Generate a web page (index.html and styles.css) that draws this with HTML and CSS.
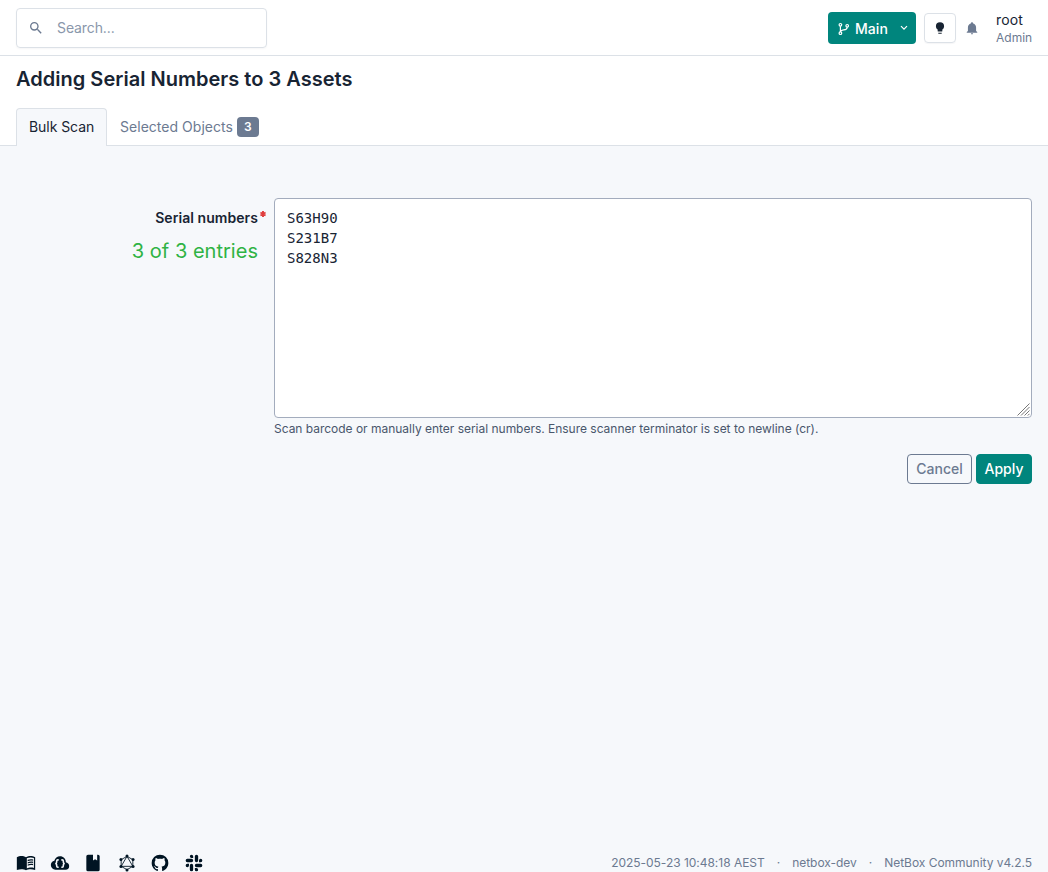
FILE: index.html
```html
<!DOCTYPE html>
<html lang="en">
<head>
<meta charset="utf-8">
<title>Adding Serial Numbers to 3 Assets</title>
<link rel="stylesheet" href="styles.css">
</head>
<body>
<div class="page">
  <header class="topbar">
    <div class="search">
      <svg class="i16" viewBox="0 0 24 24"><path d="M9.5,3A6.5,6.5 0 0,1 16,9.5C16,11.11 15.41,12.59 14.44,13.73L14.71,14H15.5L20.5,19L19,20.5L14,15.5V14.71L13.73,14.44C12.59,15.41 11.11,16 9.5,16A6.5,6.5 0 0,1 3,9.5A6.5,6.5 0 0,1 9.5,3M9.5,5C7,5 5,7 5,9.5C5,12 7,14 9.5,14C12,14 14,12 14,9.5C14,7 12,5 9.5,5Z"/></svg>
      <span>Search...</span>
    </div>
    <div class="branch">
      <svg class="branch-icon" viewBox="0 0 14 14" fill="none" stroke="currentColor" stroke-width="1.2"><circle cx="3.4" cy="2.8" r="1.3"/><circle cx="3.4" cy="11.2" r="1.3"/><circle cx="10.2" cy="3.8" r="1.3"/><path d="M3.4 4.2V9.9M10.2 5.2C10.2 7.6 8.4 7.7 6.6 7.9C4.8 8.1 3.7 8.8 3.4 9.9"/></svg>
      <span>Main</span>
      <svg class="chevron" viewBox="0 0 8 6" fill="none" stroke="currentColor" stroke-width="1.2"><path d="M1 1.2L4 4.2L7 1.2"/></svg>
    </div>
    <div class="theme"><svg class="i14" viewBox="0 0 24 24"><path d="M12,2A7,7 0 0,0 5,9C5,11.38 6.19,13.47 8,14.74V17A1,1 0 0,0 9,18H15A1,1 0 0,0 16,17V14.74C17.81,13.47 19,11.38 19,9A7,7 0 0,0 12,2M9,21A1,1 0 0,0 10,22H14A1,1 0 0,0 15,21V20H9V21Z"/></svg></div>
    <svg class="bell" viewBox="0 0 24 24"><path d="M21,19V20H3V19L5,17V11C5,7.9 7.03,5.17 10,4.29C10,4.19 10,4.1 10,4A2,2 0 0,1 12,2A2,2 0 0,1 14,4C14,4.1 14,4.19 14,4.29C16.97,5.17 19,7.9 19,11V17L21,19M14,21A2,2 0 0,1 12,23A2,2 0 0,1 10,21"/></svg>
    <div class="user"><div class="user-name">root</div><div class="user-role">Admin</div></div>
  </header>
  <section class="heading">
    <h1>Adding Serial Numbers to 3 Assets</h1>
    <nav class="tabs">
      <div class="tab active">Bulk Scan</div>
      <div class="tab">Selected Objects<span class="badge">3</span></div>
    </nav>
  </section>
  <main>
    <div class="row">
      <div class="labels">
        <div class="label">Serial numbers<svg class="required" viewBox="0 0 6 6"><path d="M3 0V6M.4 1.5L5.6 4.5M.4 4.5L5.6 1.5"/></svg></div>
        <div class="count">3 of 3 entries</div>
      </div>
      <div class="field">
        <div class="area">S63H90<br>S231B7<br>S828N3
          <svg class="grip" viewBox="0 0 13 13"><path d="M.5 12.5L12.5 .5M4 12.5L12.5 4M7.5 12.5L12.5 7.5M10.8 12.5L12.5 10.8"/></svg>
        </div>
        <div class="hint">Scan barcode or manually enter serial numbers. Ensure scanner terminator is set to newline (cr).</div>
      </div>
    </div>
    <div class="actions"><div class="btn cancel">Cancel</div><div class="btn apply">Apply</div></div>
  </main>
  <footer>
    <div class="links">
      <svg viewBox="0 0 24 24"><path fill-rule="evenodd" d="M1 5C2.5 3.9 4.7 3.5 6.5 3.5S10.5 3.9 12 5C13.5 3.9 15.7 3.5 17.5 3.5S21.5 3.9 23 5V20.5C21.3 19.7 19.3 19.4 17.5 19.4C15.5 19.4 13.5 19.7 12 20.6C10.5 19.7 8.5 19.4 6.5 19.4C4.7 19.4 2.8 19.7 1 20.5ZM13 6.3V18.5C15 17.5 19 17.2 21.5 18V6C19 5 15.3 5.2 13 6.3ZM14 8.2C16 7.4 18.5 7.3 20.5 7.8V9.3C18.5 8.8 16 8.9 14 9.8ZM14 11C16 10.2 18.5 10 20.5 10.5V12C18.5 11.5 16 11.7 14 12.5ZM14 13.7C16 12.9 18.5 12.7 20.5 13.2V14.8C18.5 14.3 16 14.4 14 15.3Z"/></svg>
      <svg viewBox="0 0 24 24"><path d="M6.5 20A5.5 5.5 0 0 1 1 14.5C1 12 2.7 9.9 5.2 9.3C6 6.3 8.7 4 12 4C16 4 19 7 19 11C21.2 11.2 23 13.1 23 15.5A4.5 4.5 0 0 1 18.5 20Z"/><path d="M10.4 8.2H9.4Q8 8.2 8 9.6V11Q8 12.6 6.2 12.6Q8 12.6 8 14.2V15.6Q8 17 9.4 17H10.4M13.6 8.2H14.6Q16 8.2 16 9.6V11Q16 12.6 17.8 12.6Q16 12.6 16 14.2V15.6Q16 17 14.6 17H13.6" fill="none" stroke="#f6f8fb" stroke-width="1.9"/></svg>
      <svg viewBox="0 0 24 24"><path d="M6 2H12V9L14.5 7.5L17 9V2H18A2 2 0 0 1 20 4V20A2 2 0 0 1 18 22H6A2 2 0 0 1 4 20V4A2 2 0 0 1 6 2Z" /></svg>
      <svg viewBox="0 0 24 24"><path d="M12 4L19 8V16L12 20L5 16V8ZM12 4L19 16H5Z" fill="none" stroke="currentColor" stroke-width="1.05"/><circle cx="12" cy="3.7" r="1.8"/><circle cx="19.3" cy="7.8" r="1.8"/><circle cx="19.3" cy="16.2" r="1.8"/><circle cx="12" cy="20.3" r="1.8"/><circle cx="4.7" cy="16.2" r="1.8"/><circle cx="4.7" cy="7.8" r="1.8"/></svg>
      <svg viewBox="0 0 24 24"><path d="M12,2A10,10 0 0,0 2,12C2,16.42 4.87,20.17 8.84,21.5C9.34,21.58 9.5,21.27 9.5,21C9.5,20.77 9.5,20.14 9.5,19.31C6.73,19.91 6.14,17.97 6.14,17.97C5.68,16.81 5.03,16.5 5.03,16.5C4.12,15.88 5.1,15.9 5.1,15.9C6.1,15.97 6.63,16.93 6.63,16.93C7.5,18.45 8.97,18 9.54,17.76C9.63,17.11 9.89,16.67 10.17,16.42C7.95,16.17 5.62,15.31 5.62,11.5C5.62,10.39 6,9.5 6.65,8.79C6.55,8.54 6.2,7.5 6.75,6.15C6.75,6.15 7.59,5.88 9.5,7.17C10.29,6.95 11.15,6.84 12,6.84C12.85,6.84 13.71,6.95 14.5,7.17C16.41,5.88 17.25,6.15 17.25,6.15C17.8,7.5 17.45,8.54 17.35,8.79C18,9.5 18.38,10.39 18.38,11.5C18.38,15.32 16.04,16.16 13.81,16.41C14.17,16.72 14.5,17.33 14.5,18.26C14.5,19.6 14.5,20.68 14.5,21C14.5,21.27 14.66,21.59 15.17,21.5C19.14,20.16 22,16.42 22,12A10,10 0 0,0 12,2Z"/></svg>
      <svg viewBox="0 0 24 24"><g id="arm"><path d="M6 15A2 2 0 1 1 4 13H6ZM7 15A2 2 0 0 1 11 15V20A2 2 0 0 1 7 20Z"/></g><use href="#arm" transform="rotate(90 12 12)"/><use href="#arm" transform="rotate(180 12 12)"/><use href="#arm" transform="rotate(270 12 12)"/></svg>
    </div>
    <div class="meta"><span>2025-05-23 10:48:18 AEST</span><span>·</span><span>netbox-dev</span><span>·</span><span>NetBox Community v4.2.5</span></div>
  </footer>
</div>
</body>
</html>
```
FILE: styles.css
```css
* { box-sizing: border-box; }
body { margin: 0; background: #f6f8fb; color: #182433; font: 14px/20px Inter, "Liberation Sans", sans-serif; }
svg { display: block; fill: currentColor; flex: none; }
svg[fill="none"] { fill: none; }
.page { height: 872px; display: flex; flex-direction: column; overflow: hidden; }
.topbar { height: 56px; background: #fff; border-bottom: 1px solid #dce1e7; padding: 0 16px; display: flex; align-items: center; }
.search { width: 251px; height: 40px; border: 1px solid #dce1e7; border-radius: 4px; box-shadow: 0 1px 2px #1824330a; display: flex; align-items: center; gap: 13px; padding-left: 11px; margin-right: auto; color: #8a97ab; letter-spacing: -.1px; }
.i16 { width: 16px; height: 16px; color: #6c7a91; }
.branch { width: 88px; height: 32px; background: #00857d; color: #fff; border-radius: 4px; display: flex; align-items: center; padding: 2px 8px 0 9px; font-weight: 500; }
.branch span { margin-left: 4px; letter-spacing: .05px; }
.branch-icon { width: 14px; height: 14px; }
.chevron { width: 8px; height: 6px; margin: 0 0 2px auto; }
.theme { width: 32px; height: 30px; margin-left: 8px; border: 1px solid #dce1e7; border-radius: 4px; box-shadow: 0 1px 1px #1824330a; display: flex; align-items: center; justify-content: center; }
.i14 { width: 14px; height: 14px; }
.bell { width: 14px; height: 14px; margin-left: 9px; color: #6c7a91; }
.user { margin-left: 17px; width: 36px; padding-top: 1px; }
.user-name { line-height: 18px; letter-spacing: .1px; }
.user-role { font-size: 12px; line-height: 17px; color: #6c7a91; }
.heading { height: 90px; background: #fff; border-bottom: 1px solid #dce1e7; padding: 9px 16px 0; }
h1 { margin: 0; font-size: 20px; line-height: 28px; font-weight: 600; letter-spacing: .02px; }
.tabs { display: flex; height: 38px; margin-top: 15px; }
.tab { height: 38px; padding: 0 12px 2px; border: 1px solid transparent; border-bottom: 0; border-radius: 4px 4px 0 0; display: flex; align-items: center; color: #6c7a91; letter-spacing: .03px; }
.tab.active { background: #f6f8fb; border-color: #dce1e7; color: #182433; width: 91px; white-space: nowrap; letter-spacing: -.06px; }
.badge { background: #6c7a91; color: #fff; font-size: 12px; font-weight: 600; width: 22px; height: 20px; border-radius: 4px; text-align: center; margin-left: 4px; }
main { padding: 52px 16px 0; flex: 1; }
.row { display: flex; }
.labels { width: 258px; padding: 10px 8px 0 0; text-align: right; }
.label { display: flex; justify-content: flex-end; font-weight: 600; line-height: 20px; letter-spacing: .06px; }
.required { width: 6px; height: 6px; margin: 3px 0 0 2px; stroke: #e03e3e; stroke-width: 1.9; }
.count { margin: 9px 8px 0 0; color: #2fb344; font-size: 20px; line-height: 28px; letter-spacing: .02px; }
.field { flex: 1; }
.area { position: relative; height: 220px; border: 1px solid #a3acbd; border-radius: 4px; background: #fff; padding: 9px 12px; font: 14px/20px "DejaVu Sans Mono", monospace; }
.grip { position: absolute; right: 1px; bottom: 1px; width: 13px; height: 13px; stroke: #777; stroke-width: 1; }
.hint { margin-top: 2px; font-size: 12px; line-height: 18px; color: #49566c; letter-spacing: -.018px; }
.actions { display: flex; justify-content: flex-end; gap: 4px; margin-top: 16px; }
.btn { height: 30px; border-radius: 4px; border: 1px solid; font-weight: 500; line-height: 28px; text-align: center; }
.cancel { width: 65px; color: #6c7a91; }
.apply { width: 56px; background: #00857d; color: #fff; border-color: #00857d; }
footer { height: 20px; padding: 1px 16px 0; display: flex; align-items: center; justify-content: space-between; }
.links { display: flex; gap: 13.6px; color: #001423; }
.links svg { width: 20px; height: 20px; }
.meta { display: flex; gap: 12px; padding-top: 1px; font-size: 12px; color: #6c7a91; letter-spacing: -.03px; }
```
